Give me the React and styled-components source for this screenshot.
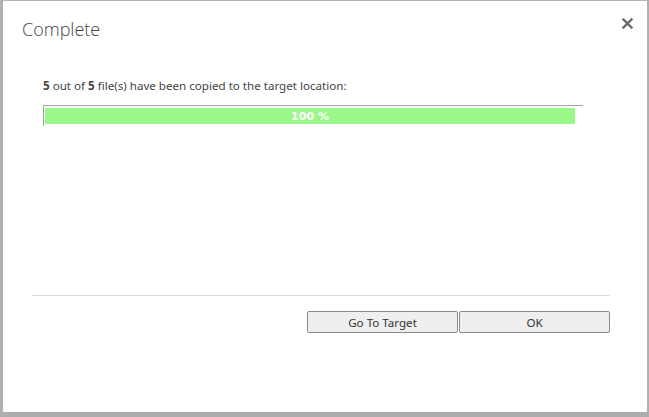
import React from "react";
import styled, { createGlobalStyle } from "styled-components";

const Global = createGlobalStyle`
  html, body { margin: 0; padding: 0; background: #fff; }
  * { box-sizing: border-box; }
`;

const Frame = styled.div`
  width: 649px;
  height: 417px;
  background: #fff;
  border-top: 1px solid #b4b4b4;
  border-left: 3px solid #b0b0b0;
  border-right: 2px solid #b0b0b0;
  border-bottom: 5px solid #adadad;
  display: flex;
  flex-direction: column;
  font-family: "Noto Sans", "Open Sans", sans-serif;
  color: #444;
`;

const Header = styled.div`
  display: flex;
  align-items: flex-start;
  justify-content: space-between;
  padding: 15px 13px 0 19px;
  height: 76px;
`;

const Title = styled.h1`
  margin: 0;
  font-family: "Open Sans", sans-serif;
  font-weight: 300;
  font-size: 18px;
  line-height: 26px;
  color: #444;
`;

const Close = styled.button`
  border: none;
  background: none;
  padding: 0;
  margin-top: 0;
  width: 14px;
  height: 14px;
  display: flex;
  align-items: center;
  justify-content: center;
  cursor: pointer;
`;

const Body = styled.div`
  padding: 0 0 0 40px;
  height: 218px;
`;

const Message = styled.p`
  margin: 0;
  font-size: 11.6px;
  line-height: 17px;
  color: #444;
  b { font-weight: 700; }
`;

const ProgressTrack = styled.div`
  margin-top: 11px;
  width: 540px;
  height: 21px;
  border-top: 1px solid #a0a0a0;
  border-left: 1px solid #a0a0a0;
  padding: 2px 0 0 1px;
`;

const ProgressFill = styled.div`
  height: 16px;
  background: #98f888;
  color: #fff;
  font-family: "DejaVu Sans", sans-serif;
  font-weight: 700;
  font-size: 11px;
  line-height: 17px;
  text-align: center;
`;

const Footer = styled.div`
  margin: 0 37px 0 29px;
  border-top: 1px solid #dcdcdc;
  padding-top: 15px;
  display: flex;
  justify-content: flex-end;
`;

const Button = styled.button`
  width: 151px;
  height: 22px;
  background: #efefef;
  border: 1px solid #8a8a8a;
  border-radius: 2px;
  font-family: "Noto Sans", "Open Sans", sans-serif;
  font-size: 11.6px;
  color: #333;
  padding: 0;
  margin-left: 1px;
  cursor: pointer;
`;

export default function App() {
  const pct = 100;
  return (
    <>
      <Global />
      <Frame>
        <Header>
          <Title>Complete</Title>
          <Close aria-label="Close">
            <svg width="11" height="11" viewBox="0 0 11 11">
              <path d="M1.5 1.5 L9.5 9.5 M9.5 1.5 L1.5 9.5" stroke="#6a6a6a" strokeWidth="2.4" strokeLinecap="square" />
            </svg>
          </Close>
        </Header>
        <Body>
          <Message>
            <b>5</b> out of <b>5</b> file(s) have been copied to the target location:
          </Message>
          <ProgressTrack>
            <ProgressFill style={{ width: `${(530 * pct) / 100}px` }}>{pct} %</ProgressFill>
          </ProgressTrack>
        </Body>
        <Footer>
          <Button>Go To Target</Button>
          <Button>OK</Button>
        </Footer>
      </Frame>
    </>
  );
}
